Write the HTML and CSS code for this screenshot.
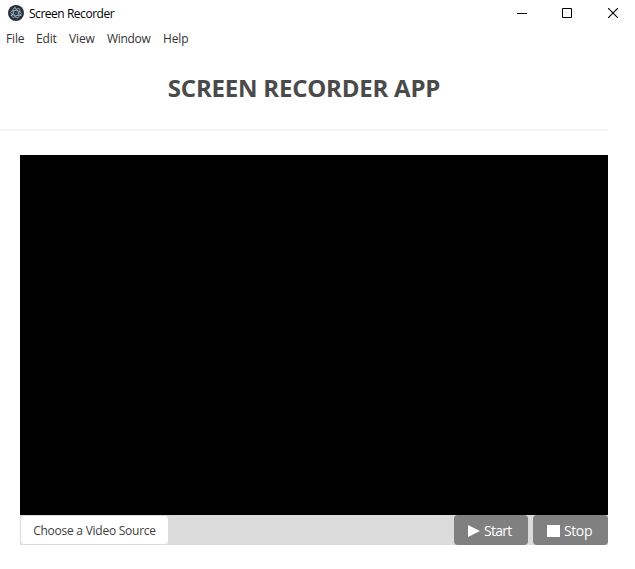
FILE: index.html
```html
<!DOCTYPE html>
<html lang="en">
<head>
<meta charset="utf-8">
<title>Screen Recorder</title>
<link rel="stylesheet" href="styles.css">
</head>
<body>
<header class="titlebar">
  <svg class="logo" width="16" height="16" viewBox="0 0 16 16">
    <circle cx="8" cy="8" r="8" fill="#2b2e3a"/>
    <g fill="none" stroke="#9fc6d1" stroke-width=".7" transform="rotate(8 8 8)">
      <ellipse cx="8" cy="8" rx="5.4" ry="2.5"/>
      <ellipse cx="8" cy="8" rx="5.4" ry="2.5" transform="rotate(60 8 8)"/>
      <ellipse cx="8" cy="8" rx="5.4" ry="2.5" transform="rotate(120 8 8)"/>
    </g>
    <g fill="#9fc6d1">
      <circle cx="8" cy="8" r=".6"/>
      <circle cx="3.4" cy="10.3" r=".7"/>
      <circle cx="12.6" cy="10.3" r=".7"/>
      <circle cx="7" cy="2.8" r=".7"/>
    </g>
  </svg>
  <span class="window-title">Screen Recorder</span>
  <div class="window-controls">
    <svg width="10" height="10" viewBox="0 0 10 10"><path d="M0 5.5h10" stroke="#000"/></svg>
    <svg width="10" height="10" viewBox="0 0 10 10"><path d="M.5.5h9v9h-9z" fill="none" stroke="#000"/></svg>
    <svg class="close" width="10" height="10" viewBox="0 0 10 10"><path d="M0 0l10 10M10 0L0 10" stroke="#000" stroke-width="1.1"/></svg>
  </div>
</header>
<nav class="menu">
  <span class="file">File</span><span class="edit">Edit</span><span class="view">View</span><span class="window">Window</span><span class="help">Help</span>
</nav>
<h1 class="heading"><span>SCREEN RECORDER APP</span></h1>
<main class="recorder">
  <div class="video"></div>
  <div class="toolbar">
    <button class="source"><span>Choose a Video Source</span></button>
    <div class="actions">
      <button class="action start"><svg width="12" height="12" viewBox="0 0 12 12"><path d="M0 0l12 6-12 6z" fill="#fff"/></svg><span>Start</span></button>
      <button class="action stop"><svg width="13" height="12" viewBox="0 0 13 12"><path d="M0 0h13v12H0z" fill="#fff"/></svg><span>Stop</span></button>
    </div>
  </div>
</main>
</body>
</html>
```

FILE: styles.css
```css
* { box-sizing: border-box; }
body {
  margin: 0;
  height: 569px;
  overflow: hidden;
  background: #fff;
  color: #000;
  font-family: "Open Sans", "Noto Sans", sans-serif;
}
.titlebar {
  display: flex;
  align-items: center;
  height: 26px;
  padding: 0 17px 0 8px;
}
.window-title {
  margin: 1px 0 0 5px;
  font-size: 12px;
  letter-spacing: -0.47px;
}
.window-controls {
  display: flex;
  gap: 35px;
  margin-left: auto;
}
.window-controls svg { display: block; }
.window-controls .close { margin-left: 1px; }
.menu {
  display: flex;
  height: 26px;
  padding: 0 0 1px 6px;
  align-items: center;
  font-size: 12px;
  letter-spacing: -0.15px;
  color: #333;
}
.menu span { white-space: nowrap; }
.file { width: 30px; }
.edit { width: 33px; }
.view { width: 38px; }
.window { width: 56px; letter-spacing: -0.3px; }
.heading {
  display: flex;
  justify-content: center;
  align-items: center;
  width: 608px;
  height: 79px;
  margin: 0;
  padding-bottom: 6px;
  border-bottom: 2px solid #f4f4f4;
  font-size: 24px;
  font-weight: 700;
  line-height: 36px;
  letter-spacing: -0.22px;
  color: #4a4a4a;
}
.recorder {
  width: 588px;
  margin: 24px 0 0 20px;
}
.video { height: 360px; background: #000; }
.toolbar {
  display: flex;
  justify-content: space-between;
  height: 30px;
  background: #dbdbdb;
}
button {
  margin: 0;
  padding: 0;
  border: 0;
  font: 12px "Open Sans", "Noto Sans", sans-serif;
  white-space: nowrap;
}
.source {
  width: 149px;
  padding-top: 1px;
  border: 1px solid #dbdbdb;
  border-radius: 4px;
  background: #fff;
  color: #404040;
  letter-spacing: -0.25px;
}
.actions { display: flex; gap: 5px; }
.action {
  display: flex;
  align-items: center;
  gap: 4px;
  height: 30px;
  padding-left: 14px;
  border-radius: 4px;
  background: #808080;
  color: #fff;
  font-size: 14px;
  font-weight: 500;
}
.start { width: 74px; letter-spacing: -0.7px; }
.stop { width: 75px; letter-spacing: -0.4px; }
.action svg { margin-top: 2px; }
.action span { padding-top: 1px; }
```
